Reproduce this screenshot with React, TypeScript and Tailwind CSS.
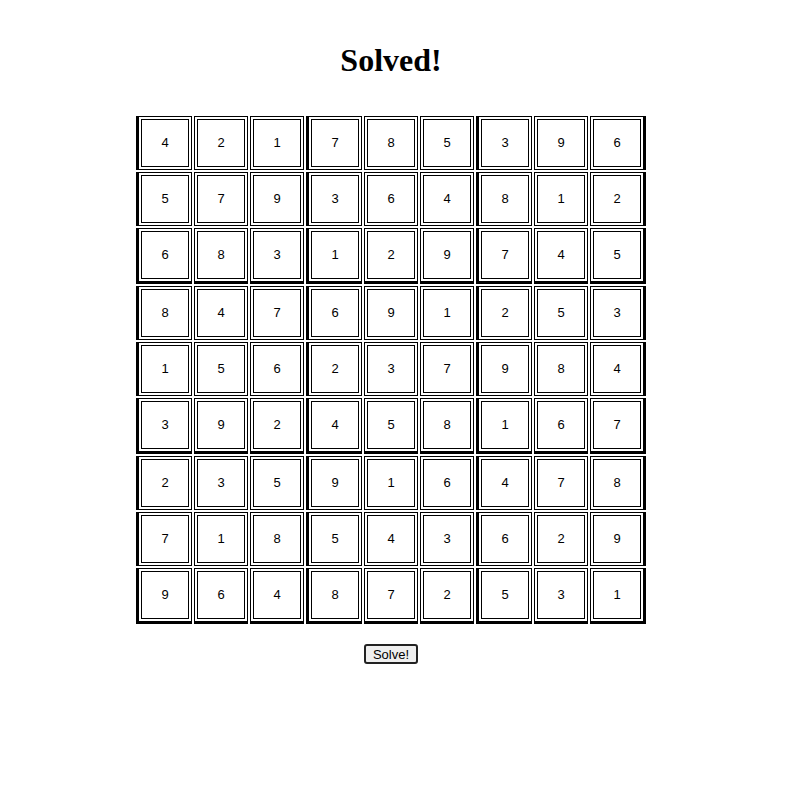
import React from 'react';

const board = [
  [4, 2, 1, 7, 8, 5, 3, 9, 6],
  [5, 7, 9, 3, 6, 4, 8, 1, 2],
  [6, 8, 3, 1, 2, 9, 7, 4, 5],
  [8, 4, 7, 6, 9, 1, 2, 5, 3],
  [1, 5, 6, 2, 3, 7, 9, 8, 4],
  [3, 9, 2, 4, 5, 8, 1, 6, 7],
  [2, 3, 5, 9, 1, 6, 4, 7, 8],
  [7, 1, 8, 5, 4, 3, 6, 2, 9],
  [9, 6, 4, 8, 7, 2, 5, 3, 1],
];

const Cell = ({ value, row, col }: { value: number; row: number; col: number }) => {
  // thick edges mark the 3x3 boxes
  const left = col % 3 === 0 ? 'border-l-[3px]' : 'border-l';
  const right = col === 8 ? 'border-r-[3px]' : 'border-r';
  const bottom = row % 3 === 2 ? 'border-b-[3px]' : 'border-b';
  return (
    <div className={`border-t border-solid border-black p-[2px] ${left} ${right} ${bottom}`}>
      <div className="w-[48px] h-[48px] border border-black flex items-center justify-center text-[13px] text-black">
        {value}
      </div>
    </div>
  );
};

export default function App() {
  return (
    <div className="bg-white min-h-[795px] pr-[5px] flex flex-col items-center" style={{ fontFamily: '"Liberation Sans", Arial, sans-serif' }}>
      <h1 className="mt-[42px] text-[32px] font-bold leading-[37px] text-black" style={{ fontFamily: '"Liberation Serif", "Times New Roman", serif' }}>
        Solved!
      </h1>
      <div className="mt-[37px] grid grid-cols-[repeat(9,auto)] gap-[2px] items-start">
        {board.map((r, ri) =>
          r.map((v, ci) => <Cell key={`${ri}-${ci}`} value={v} row={ri} col={ci} />)
        )}
      </div>
      <button className="mt-[20px] h-[20px] px-[7px] border-2 border-[#222] rounded-[3px] bg-[#efefef] text-[13px] leading-none text-black">
        Solve!
      </button>
    </div>
  );
}
